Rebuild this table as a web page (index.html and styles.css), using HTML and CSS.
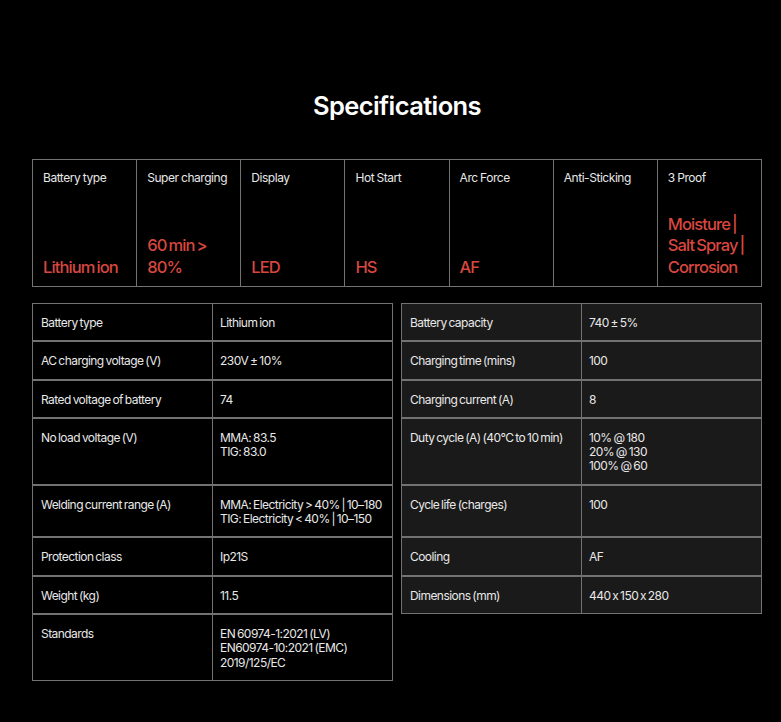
FILE: index.html
```html
<!DOCTYPE html>
<html lang="en">
<head>
<meta charset="utf-8">
<title>Specifications</title>
<link rel="stylesheet" href="styles.css">
</head>
<body>
<section class="specs">
  <h2 class="specs-title">Specifications</h2>

  <div class="highlights">
    <div class="hl"><span class="hl-label">Battery type</span><span class="hl-value">Lithium ion</span></div>
    <div class="hl"><span class="hl-label">Super charging</span><span class="hl-value">60 min &gt;<br>80%</span></div>
    <div class="hl"><span class="hl-label">Display</span><span class="hl-value">LED</span></div>
    <div class="hl"><span class="hl-label">Hot Start</span><span class="hl-value">HS</span></div>
    <div class="hl"><span class="hl-label">Arc Force</span><span class="hl-value">AF</span></div>
    <div class="hl"><span class="hl-label">Anti-Sticking</span><span class="hl-value"></span></div>
    <div class="hl"><span class="hl-label">3 Proof</span><span class="hl-value">Moisture |<br>Salt Spray |<br>Corrosion</span></div>
  </div>

  <div class="tables">
    <div class="row left"><div class="k">Battery type</div><div class="v">Lithium ion</div></div>
    <div class="row right"><div class="k">Battery capacity</div><div class="v">740 ± 5%</div></div>

    <div class="row left"><div class="k">AC charging voltage (V)</div><div class="v">230V ± 10%</div></div>
    <div class="row right"><div class="k">Charging time (mins)</div><div class="v">100</div></div>

    <div class="row left"><div class="k">Rated voltage of battery</div><div class="v">74</div></div>
    <div class="row right"><div class="k">Charging current (A)</div><div class="v">8</div></div>

    <div class="row left"><div class="k">No load voltage (V)</div><div class="v">MMA: 83.5<br>TIG: 83.0</div></div>
    <div class="row right"><div class="k">Duty cycle (A) (40°C to 10 min)</div><div class="v">10% @ 180<br>20% @ 130<br>100% @ 60</div></div>

    <div class="row left"><div class="k">Welding current range (A)</div><div class="v">MMA: Electricity &gt; 40% | 10–180<br>TIG: Electricity &lt; 40% | 10–150</div></div>
    <div class="row right"><div class="k">Cycle life (charges)</div><div class="v">100</div></div>

    <div class="row left"><div class="k">Protection class</div><div class="v">Ip21S</div></div>
    <div class="row right"><div class="k">Cooling</div><div class="v">AF</div></div>

    <div class="row left"><div class="k">Weight (kg)</div><div class="v">11.5</div></div>
    <div class="row right"><div class="k">Dimensions (mm)</div><div class="v">440 x 150 x 280</div></div>

    <div class="row left"><div class="k">Standards</div><div class="v">EN 60974-1:2021 (LV)<br>EN60974-10:2021 (EMC)<br>2019/125/EC</div></div>
  </div>
</section>
</body>
</html>
```

FILE: styles.css
```css
* { box-sizing: border-box; }

html, body {
  margin: 0;
  padding: 0;
  background: #000;
}

body {
  font-family: Inter, "Noto Sans", sans-serif;
  color: #e8e8e8;
}

.specs {
  width: 730px;
  margin-left: 32px;
  padding-top: 89px;
}

.specs-title {
  margin: 0 0 36px;
  text-align: center;
  font-size: 25.5px;
  line-height: 34px;
  font-weight: 600;
  letter-spacing: -0.6px;
  color: #fff;
}

.highlights {
  display: grid;
  grid-template-columns: repeat(7, 1fr);
  gap: 1px;
  border: 1px solid #727272;
  background: #727272;
}

.hl {
  background: #000;
  height: 126px;
  padding: 10px 6px 8px 10px;
  display: flex;
  flex-direction: column;
  justify-content: space-between;
}

.hl-label {
  font-size: 12px;
  line-height: 16px;
  letter-spacing: -0.45px;
  word-spacing: -0.5px;
  color: #e8e8e8;
}

.hl-value {
  font-size: 16.5px;
  line-height: 21.5px;
  font-weight: 500;
  letter-spacing: -0.9px;
  word-spacing: -1.5px;
  color: #d8473f;
}

.tables {
  display: grid;
  grid-template-columns: 361px 361px;
  column-gap: 8px;
  margin-top: 16px;
}

.row {
  display: grid;
  grid-template-columns: 179px 1fr;
  border: 1px solid #727272;
  font-size: 12px;
  line-height: 14.3px;
  letter-spacing: -0.55px;
  word-spacing: -1px;
}

.row.left { background: #000; }
.row.right { background: #1b1a1a; }

.k, .v {
  padding: 12px 8px 10px 8px;
  white-space: nowrap;
}

.v {
  border-left: 1px solid #727272;
  padding-left: 7px;
}
```
